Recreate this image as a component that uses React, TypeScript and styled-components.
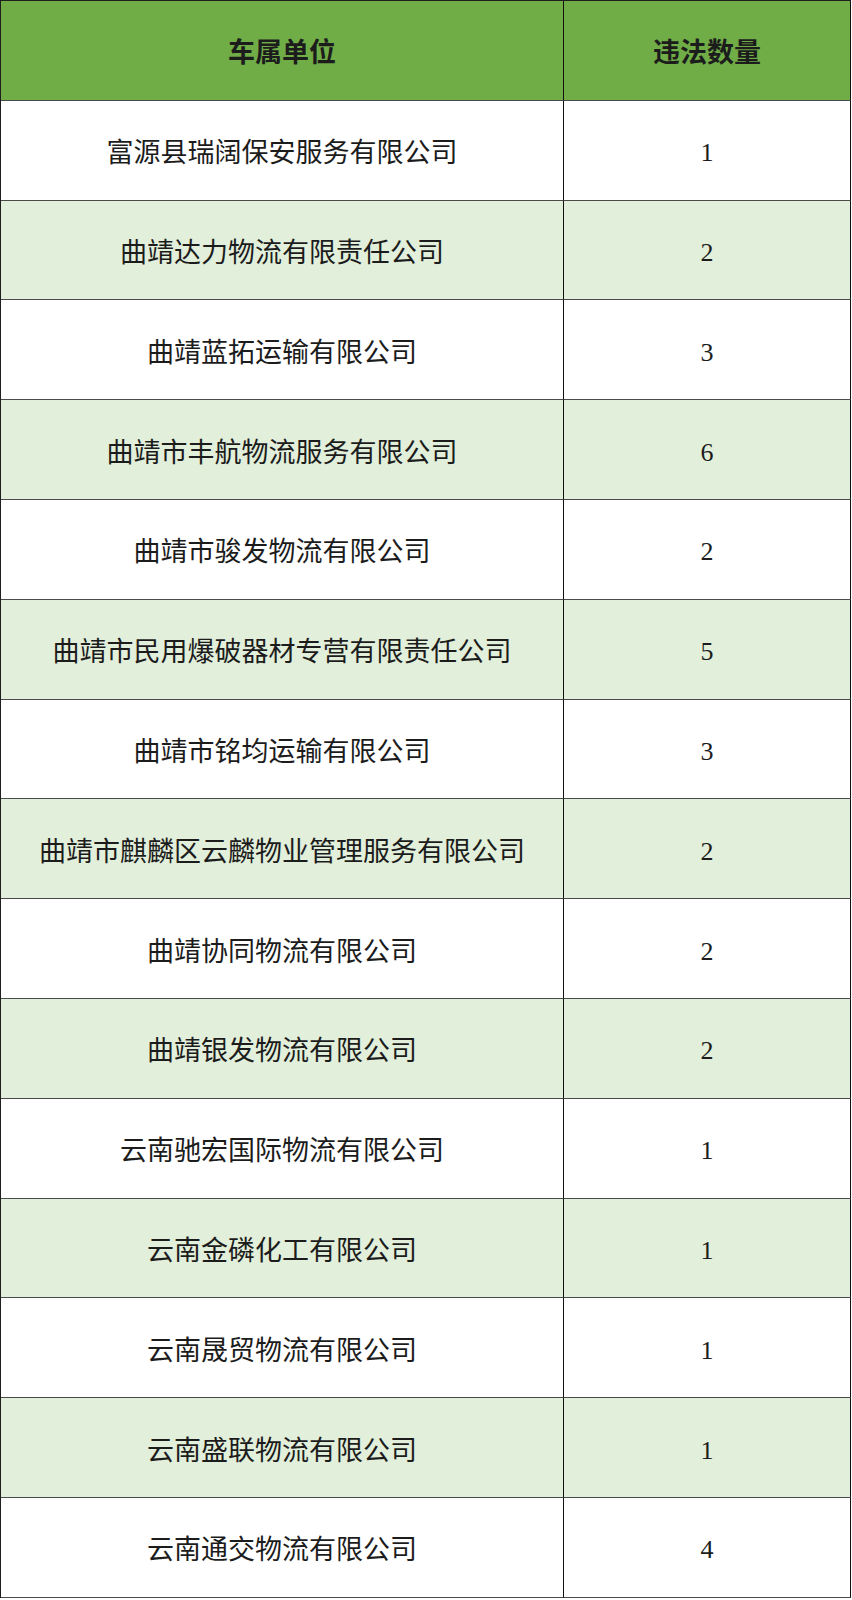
import React from "react";
import styled, { createGlobalStyle } from "styled-components";

const Global = createGlobalStyle`
  html, body { margin: 0; padding: 0; background: #ffffff; }
  body { font-family: "Noto Sans CJK SC", "Noto Sans", sans-serif; }
`;

const Table = styled.div`
  display: grid;
  grid-template-columns: 563px 287px;
  grid-auto-rows: 99.8px;
  width: 851px;
  border-left: 1px solid #1e1e1e;
  border-top: 1px solid #1e1e1e;
  box-sizing: border-box;
`;

const Cell = styled.div<{ $tone: "head" | "odd" | "even"; $num?: boolean }>`
  display: flex;
  align-items: center;
  justify-content: center;
  box-sizing: border-box;
  border-right: 1px solid #111;
  border-bottom: 1.5px solid #4a4a4a;
  background: ${(p) =>
    p.$tone === "head" ? "#70ad47" : p.$tone === "even" ? "#e2efda" : "#ffffff"};
  color: #1c1c1c;
  font-family: ${(p) =>
    p.$num
      ? '"Liberation Serif", "Times New Roman", serif'
      : '"Noto Sans CJK SC", "Noto Sans", sans-serif'};
  font-size: ${(p) => (p.$tone === "head" ? "27px" : p.$num ? "26px" : "27px")};
  font-weight: ${(p) => (p.$tone === "head" ? 700 : 400)};
  white-space: nowrap;
  padding-top: ${(p) => (p.$num ? "6px" : "1px")};
`;

const rows: [string, number][] = [
  ["富源县瑞阔保安服务有限公司", 1],
  ["曲靖达力物流有限责任公司", 2],
  ["曲靖蓝拓运输有限公司", 3],
  ["曲靖市丰航物流服务有限公司", 6],
  ["曲靖市骏发物流有限公司", 2],
  ["曲靖市民用爆破器材专营有限责任公司", 5],
  ["曲靖市铭均运输有限公司", 3],
  ["曲靖市麒麟区云麟物业管理服务有限公司", 2],
  ["曲靖协同物流有限公司", 2],
  ["曲靖银发物流有限公司", 2],
  ["云南驰宏国际物流有限公司", 1],
  ["云南金磷化工有限公司", 1],
  ["云南晟贸物流有限公司", 1],
  ["云南盛联物流有限公司", 1],
  ["云南通交物流有限公司", 4],
];

export default function App() {
  return (
    <>
      <Global />
      <Table>
        <Cell $tone="head">车属单位</Cell>
        <Cell $tone="head">违法数量</Cell>
        {rows.map(([name, n], i) => {
          const tone = i % 2 === 1 ? "even" : "odd";
          return (
            <React.Fragment key={name}>
              <Cell $tone={tone}>{name}</Cell>
              <Cell $tone={tone} $num>
                {n}
              </Cell>
            </React.Fragment>
          );
        })}
      </Table>
    </>
  );
}
